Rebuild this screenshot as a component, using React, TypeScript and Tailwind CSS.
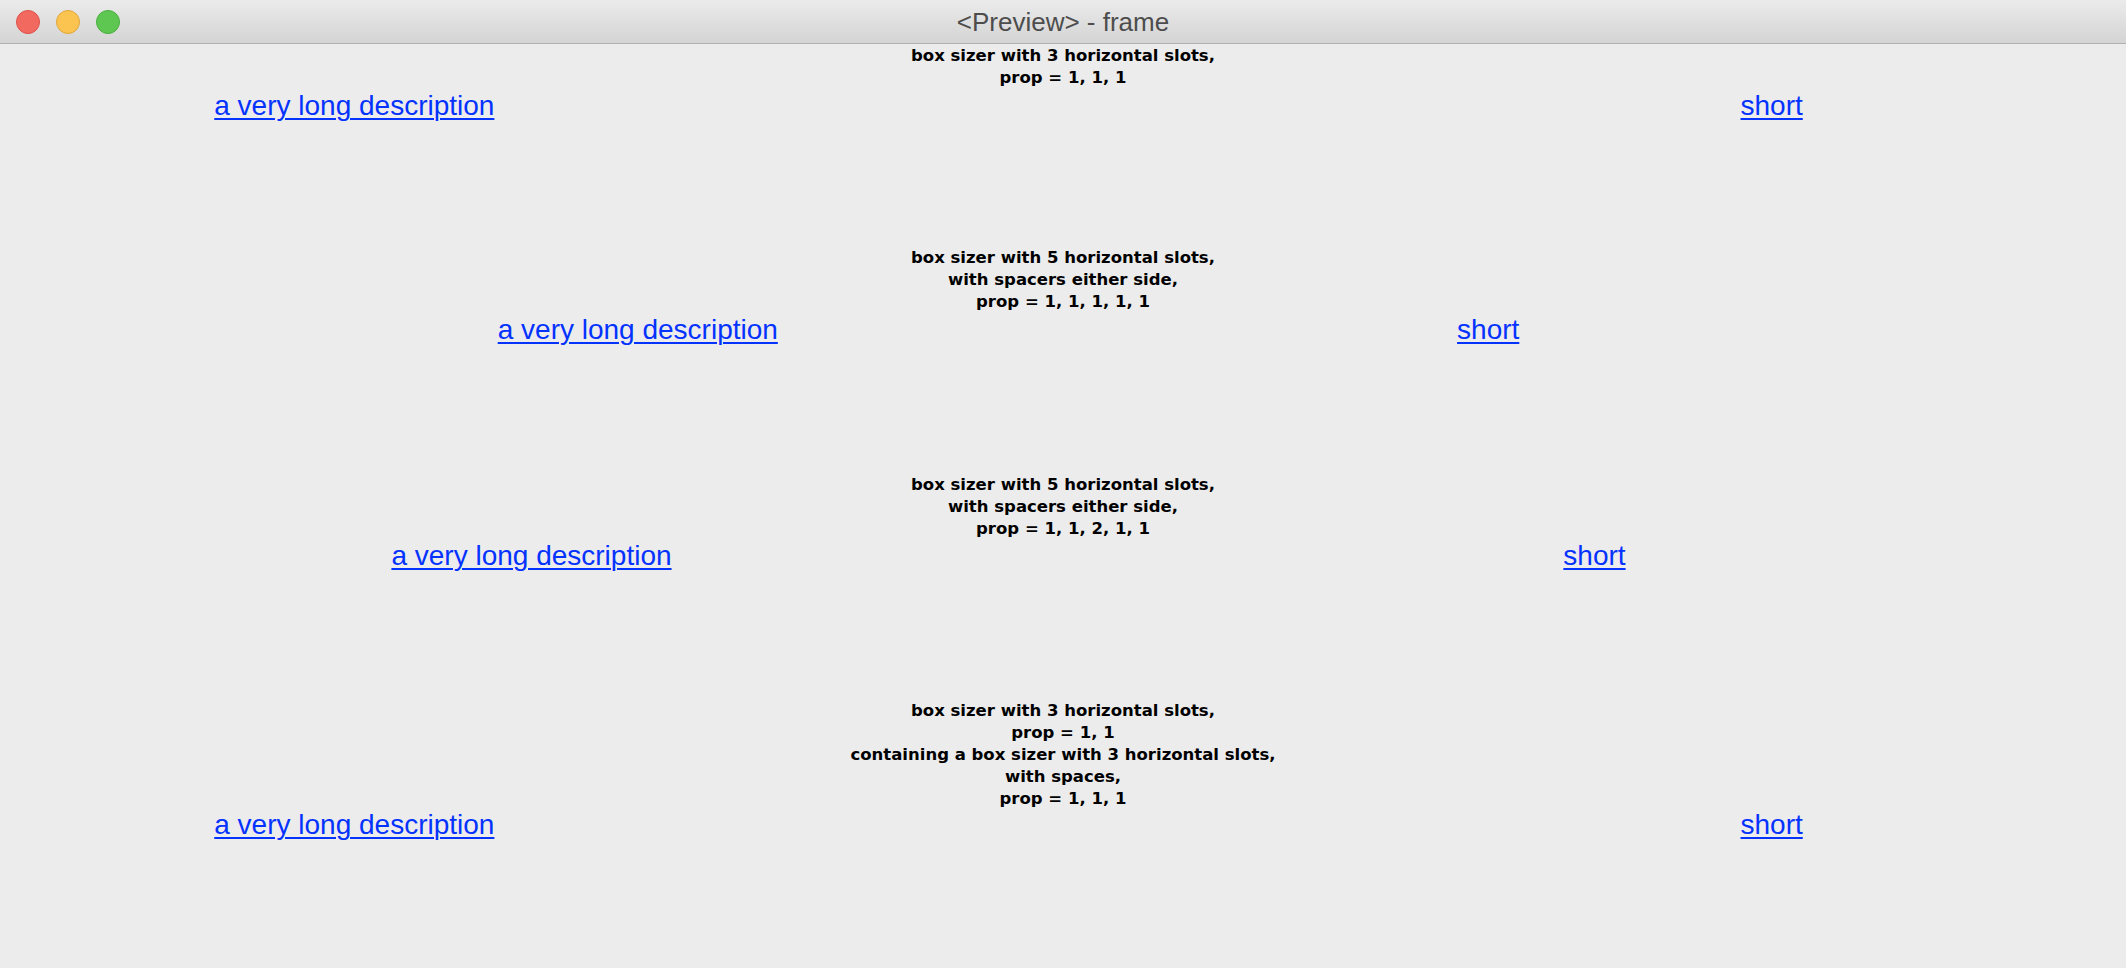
import React from 'react';

const labelFont = { fontFamily: '"DejaVu Sans", "Liberation Sans", sans-serif' };
const linkFont = { fontFamily: '"Liberation Sans", Arial, sans-serif' };

function TitleBar() {
  return (
    <div className="relative h-[44px] flex-shrink-0 flex items-center justify-center bg-gradient-to-b from-[#ebebeb] to-[#d4d4d4] border-b border-[#b1b1b1]">
      {/* traffic lights */}
      <div className="absolute left-[16px] top-[10px] flex gap-[16px]">
        <span className="w-[24px] h-[24px] rounded-full bg-[#f2695f] border border-[#de5149]" />
        <span className="w-[24px] h-[24px] rounded-full bg-[#fbc34f] border border-[#e0a73a]" />
        <span className="w-[24px] h-[24px] rounded-full bg-[#5ec752] border border-[#4aae3f]" />
      </div>
      <span className="text-[26px] leading-none text-[#4d4d4d]" style={linkFont}>
        &lt;Preview&gt; - frame
      </span>
    </div>
  );
}

function Link({ text, offset }: { text: string; offset: string }) {
  return (
    <a
      href="#"
      className={`${offset} text-[28px] leading-[32px] text-[#0432ff] underline decoration-[2px] underline-offset-[3px] whitespace-nowrap`}
      style={linkFont}
    >
      {text}
    </a>
  );
}

function Label({ lines }: { lines: string[] }) {
  return (
    <div className="text-center font-bold text-[16.5px] leading-[22px] text-black whitespace-nowrap" style={labelFont}>
      {lines.map((l, i) => (
        <div key={i}>{l}</div>
      ))}
    </div>
  );
}

export default function App() {
  return (
    <div className="w-[2126px] h-[968px] bg-[#ececec] flex flex-col overflow-hidden">
      <TitleBar />

      <div className="flex-1 flex flex-col">
        {/* 3 slots, prop 1,1,1 */}
        <div className="h-[203px] pt-[1px] grid grid-cols-3 justify-items-center items-start">
          <Link text="a very long description" offset="mt-[45px]" />
          <Label lines={['box sizer with 3 horizontal slots,', 'prop = 1, 1, 1']} />
          <Link text="short" offset="mt-[45px]" />
        </div>

        {/* 5 slots, prop 1,1,1,1,1 */}
        <div className="h-[227px] grid grid-cols-5 justify-items-center items-start">
          <div />
          <Link text="a very long description" offset="mt-[67px]" />
          <Label lines={['box sizer with 5 horizontal slots,', 'with spacers either side,', 'prop = 1, 1, 1, 1, 1']} />
          <Link text="short" offset="mt-[67px]" />
          <div />
        </div>

        {/* 5 slots, prop 1,1,2,1,1 */}
        <div className="h-[226px] grid grid-cols-[1fr_1fr_2fr_1fr_1fr] justify-items-center items-start">
          <div />
          <Link text="a very long description" offset="mt-[66px]" />
          <Label lines={['box sizer with 5 horizontal slots,', 'with spacers either side,', 'prop = 1, 1, 2, 1, 1']} />
          <Link text="short" offset="mt-[66px]" />
          <div />
        </div>

        {/* nested sizer */}
        <div className="flex-1 grid grid-cols-3 justify-items-center items-start">
          <Link text="a very long description" offset="mt-[109px]" />
          <Label
            lines={[
              'box sizer with 3 horizontal slots,',
              'prop = 1, 1',
              'containing a box sizer with 3 horizontal slots,',
              'with spaces,',
              'prop = 1, 1, 1',
            ]}
          />
          <Link text="short" offset="mt-[109px]" />
        </div>
      </div>
    </div>
  );
}
